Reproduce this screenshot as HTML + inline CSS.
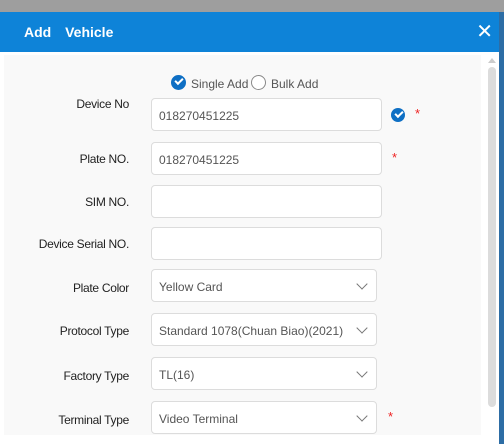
<!DOCTYPE html>
<html><head><style>
*{margin:0;padding:0;box-sizing:border-box}
body{width:504px;height:444px;overflow:hidden;background:#9e9e9e;font-family:"Liberation Sans",sans-serif;font-size:12px;position:relative}
.right{position:absolute;left:499px;top:12px;width:5px;height:432px;background:#2d6da5}
.dlg{position:absolute;left:0;top:12px;width:499px;height:432px;background:#fff}
.hd{height:40px;background:#0e83d8;color:#fff;font-weight:bold;font-size:14px;line-height:40px;padding-left:24px;word-spacing:10px;position:relative}
.x{position:absolute;right:6px;top:0;font-size:20px;font-weight:normal}
.panel{position:absolute;left:4px;top:55px;width:477px;height:380px;background:#f9f9f9}
.sb{position:absolute;left:488px;top:67px;width:8px;height:340px;background:#dcdcdc;border-radius:4px}
.sbu{position:absolute;left:488px;top:58px;width:0;height:0;border-left:4px solid transparent;border-right:4px solid transparent;border-bottom:5px solid #ccc}
.lbl{position:absolute;right:375px;color:#222;font-size:12px;text-align:right;white-space:nowrap;letter-spacing:-0.3px}
.in{position:absolute;left:151px;width:231px;height:33px;background:#fff;border:1px solid #dcdcdc;border-radius:4px;color:#555;line-height:34px;padding-left:7px}
.sel{width:226px}
.chev{position:absolute;right:10px;top:10px;width:8px;height:8px;border-right:1px solid #777;border-bottom:1px solid #777;transform:rotate(45deg)}
.star{position:absolute;color:#e22;font-size:13px}
.chk{position:absolute;width:15px;height:15px;border-radius:50%;background:#0e6fc4}
.chk:after{content:"";position:absolute;left:4px;top:3px;width:6px;height:3px;border-left:2px solid #fff;border-bottom:2px solid #fff;transform:rotate(-45deg)}
</style></head><body>
<div class="right"></div>
<div class="dlg">
<div class="hd">Add Vehicle<span class="x">✕</span></div>
</div>
<div class="panel"></div>
<div class="sbu"></div><div class="sb"></div>
<div class="chk" style="left:171px;top:75px"></div>
<div style="position:absolute;left:191px;top:77px;color:#555">Single Add</div>
<div style="position:absolute;left:251px;top:75px;width:15px;height:15px;border:1px solid #888;border-radius:50%;background:#fff"></div>
<div style="position:absolute;left:271px;top:77px;color:#555">Bulk Add</div>

<div class="lbl" style="top:97px">Device No</div>
<div class="in" style="top:98px">018270451225</div>
<div class="chk" style="left:391px;top:108px;width:14px;height:14px"></div>
<div class="star" style="left:415px;top:106px">*</div>

<div class="lbl" style="top:152px">Plate NO.</div>
<div class="in" style="top:142px">018270451225</div>
<div class="star" style="left:392px;top:150px">*</div>

<div class="lbl" style="top:195px">SIM NO.</div>
<div class="in" style="top:185px"></div>

<div class="lbl" style="top:237px">Device Serial NO.</div>
<div class="in" style="top:227px"></div>

<div class="lbl" style="top:281px">Plate Color</div>
<div class="in sel" style="top:269px">Yellow Card<span class="chev"></span></div>

<div class="lbl" style="top:324px">Protocol Type</div>
<div class="in sel" style="top:313px">Standard 1078(Chuan Biao)(2021)<span class="chev"></span></div>

<div class="lbl" style="top:369px">Factory Type</div>
<div class="in sel" style="top:357px">TL(16)<span class="chev"></span></div>

<div class="lbl" style="top:413px">Terminal Type</div>
<div class="in sel" style="top:401px">Video Terminal<span class="chev"></span></div>
<div class="star" style="left:388px;top:409px">*</div>
</body></html>
